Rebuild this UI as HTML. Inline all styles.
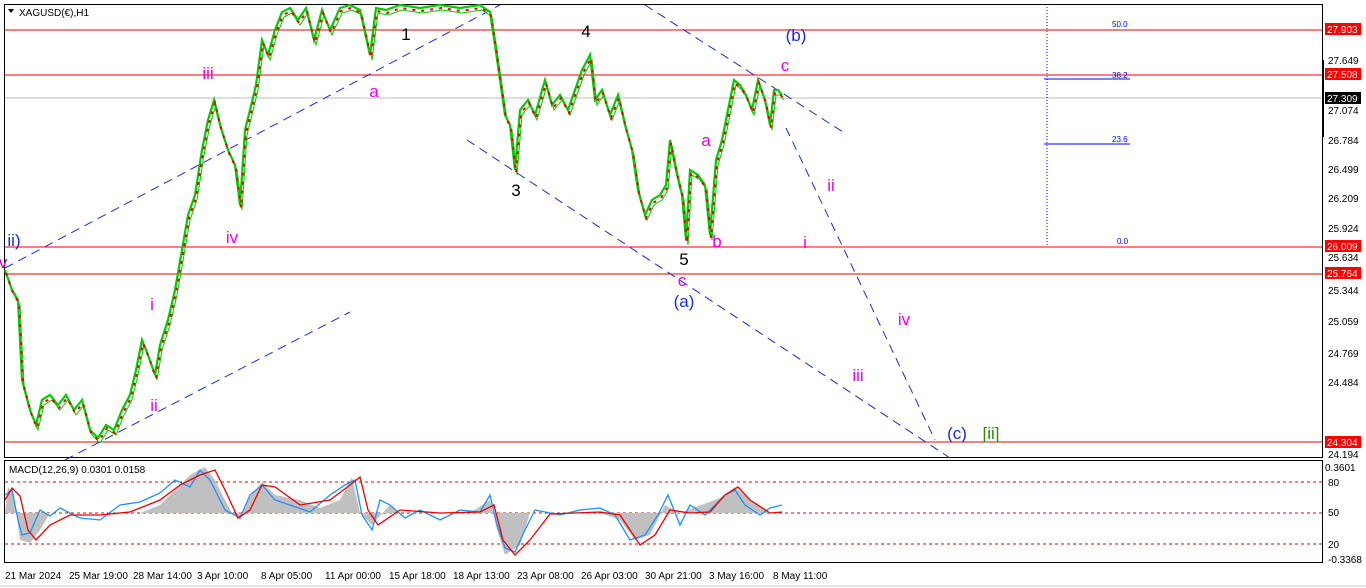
<!DOCTYPE html>
<html><head><style>
body{margin:0;width:1366px;height:588px;background:#fff;overflow:hidden;font-family:"Liberation Sans",sans-serif}
svg{display:block}
</style></head><body>
<svg width="1366" height="588" xmlns="http://www.w3.org/2000/svg" font-family="Liberation Sans, sans-serif">
<defs>
<polyline id="pr" fill="none" points="5,270 12,290 18,300 22,380 30,410 36,425 42,400 50,395 58,405 66,395 74,410 82,400 90,430 98,438 106,425 114,430 122,410 130,395 136,370 142,340 148,355 155,375 160,345 168,320 175,290 182,250 188,215 195,195 202,150 208,120 214,100 220,125 228,150 235,165 240,205 245,130 250,110 256,85 262,40 268,55 275,30 282,12 290,8 298,20 306,8 314,40 322,10 330,30 340,8 350,5 360,10 370,55 376,8 386,10 400,5 420,8 440,5 460,8 480,5 490,12 495,45 500,80 505,115 510,125 515,170 520,110 528,100 535,115 545,80 552,105 560,95 568,110 575,90 582,70 590,55 595,100 602,90 610,115 618,95 625,125 632,150 638,190 645,215 652,200 660,195 666,185 670,140 676,170 682,195 686,240 690,170 698,175 705,185 710,235 716,160 722,140 728,110 734,80 740,85 746,95 752,110 758,80 765,100 770,125 774,90 778,90 782,95"/>
</defs>
<rect width="1366" height="588" fill="#fff"/>
<rect x="4.5" y="4.5" width="1318" height="453" fill="none" stroke="#000"/>
<rect x="4.5" y="460.5" width="1318" height="102" fill="none" stroke="#000"/>
<line x1="0" y1="586" x2="1366" y2="586" stroke="#ccc"/>
<line x1="5" y1="30" x2="1322" y2="30" stroke="#e00"/>
<line x1="5" y1="75" x2="1322" y2="75" stroke="#e00"/>
<line x1="5" y1="98" x2="1322" y2="98" stroke="#bbb"/>
<line x1="5" y1="247" x2="1322" y2="247" stroke="#e00"/>
<line x1="5" y1="274" x2="1322" y2="274" stroke="#e00"/>
<line x1="5" y1="442" x2="1322" y2="442" stroke="#e00"/>
<line x1="1047" y1="4" x2="1047" y2="247" stroke="#00f" stroke-dasharray="1,2"/>
<line x1="1044" y1="79" x2="1130" y2="79" stroke="#00f"/>
<line x1="1044" y1="144" x2="1130" y2="144" stroke="#00f"/>
<g font-size="8" fill="#00f"><text x="1112" y="27">50.0</text><text x="1112" y="78">38.2</text><text x="1112" y="142">23.6</text><text x="1117" y="244">0.0</text></g>
<g stroke="#1a2cd6" stroke-dasharray="9,6" stroke-width="1" fill="none">
<line x1="5" y1="268" x2="500" y2="5"/>
<line x1="65" y1="460" x2="350" y2="312"/>
<line x1="467" y1="140" x2="950" y2="458"/>
<line x1="645" y1="5" x2="843" y2="132"/>
<line x1="786" y1="128" x2="935" y2="440"/>
</g>
<use href="#pr" stroke="#0c0" stroke-width="2.2"/>
<use href="#pr" stroke="#0c0" stroke-width="1" transform="translate(2,5)"/>
<use href="#pr" stroke="#e00" stroke-width="2" stroke-dasharray="3,6" transform="translate(1,3)"/>
<g font-size="17" text-anchor="middle">
<text x="3" y="268" fill="#c0c">v</text>
<text x="14" y="246" fill="#1a2cd6">ii)</text>
<text x="208" y="79" fill="#e0e">iii</text>
<text x="232" y="243" fill="#e0e">iv</text>
<text x="152" y="310" fill="#e0e">i</text>
<text x="154" y="411" fill="#e0e">ii</text>
<text x="374" y="97" fill="#e0e">a</text>
<text x="406" y="40" fill="#000">1</text>
<text x="516" y="196" fill="#000">3</text>
<text x="586" y="37" fill="#000">4</text>
<text x="684" y="265" fill="#000">5</text>
<text x="682" y="286" fill="#e0e">c</text>
<text x="684" y="307" fill="#1a2cd6">(a)</text>
<text x="706" y="146" fill="#e0e">a</text>
<text x="717" y="247" fill="#e0e">b</text>
<text x="785" y="71" fill="#e0e">c</text>
<text x="796" y="41" fill="#1a2cd6">(b)</text>
<text x="831" y="191" fill="#e0e">ii</text>
<text x="805" y="248" fill="#e0e">i</text>
<text x="904" y="325" fill="#e0e">iv</text>
<text x="858" y="381" fill="#e0e">iii</text>
<text x="957" y="439" fill="#1a2cd6">(c)</text>
<text x="991" y="439" fill="#2a8a00">[ii]</text>
</g>
<path d="M8 9 L14 9 L11 13 Z" fill="#000"/>
<text x="19" y="16" font-size="10">XAGUSD(€),H1</text>
<g font-size="10" fill="#000">
<text x="1328" y="64">27.649</text><text x="1328" y="114">27.074</text><text x="1328" y="144">26.784</text><text x="1328" y="173">26.499</text><text x="1328" y="202">26.209</text><text x="1328" y="232">25.924</text><text x="1328" y="261">25.634</text><text x="1328" y="294">25.344</text><text x="1328" y="325">25.059</text><text x="1328" y="357">24.769</text><text x="1328" y="386">24.484</text><text x="1328" y="458">24.194</text>
<text x="1325" y="471">0.3601</text><text x="1328" y="486">80</text><text x="1328" y="516">50</text><text x="1328" y="548">20</text><text x="1328" y="563">-0.3368</text>
</g>
<rect x="1322" y="60" width="2" height="77" fill="#000"/>
<g font-size="10" fill="#fff">
<rect x="1325" y="23" width="36" height="12" fill="#f00"/><text x="1327" y="33">27.903</text>
<rect x="1325" y="68" width="36" height="12" fill="#f00"/><text x="1327" y="78">27.508</text>
<rect x="1325" y="92" width="36" height="12" fill="#000"/><text x="1327" y="102">27.309</text>
<rect x="1325" y="240" width="36" height="12" fill="#f00"/><text x="1327" y="250">26.009</text>
<rect x="1325" y="267" width="36" height="12" fill="#f00"/><text x="1327" y="277">25.764</text>
<rect x="1325" y="436" width="36" height="12" fill="#f00"/><text x="1327" y="446">24.304</text>
</g>
<text x="9" y="473" font-size="10">MACD(12,26,9) 0.0301 0.0158</text>
<line x1="5" y1="482" x2="1322" y2="482" stroke="#e00" stroke-dasharray="3,3"/>
<line x1="5" y1="513" x2="1322" y2="513" stroke="#e00" stroke-dasharray="3,3"/>
<line x1="5" y1="544" x2="1322" y2="544" stroke="#e00" stroke-dasharray="3,3"/>
<polygon fill="#c0c0c0" points="5,513 8,487 14,495 20,540 30,543 40,530 50,513 140,513 160,505 190,475 205,467 215,480 225,500 232,513 240,520 250,497 262,482 275,495 300,500 320,508 340,500 352,477 360,513 372,525 390,505 400,513 470,513 490,500 497,530 505,555 520,545 530,513 600,513 620,520 635,540 650,535 665,505 680,513 720,498 735,487 750,500 770,513 780,513 5,513"/>
<polyline fill="none" stroke="#1e90ff" stroke-width="1.3" points="5,495 12,490 18,520 22,535 30,533 40,510 50,516 60,508 80,518 100,520 120,505 140,502 160,493 175,480 190,487 200,470 210,480 225,510 240,518 250,495 262,485 275,500 290,505 310,512 330,495 345,485 355,480 362,515 372,530 380,500 390,505 405,518 420,510 440,520 460,510 480,512 490,495 497,525 505,548 515,552 525,530 535,510 560,515 580,510 600,508 615,515 630,540 645,535 658,515 668,495 680,525 690,505 705,515 715,505 725,495 735,490 745,505 760,515 770,508 782,505"/>
<polyline fill="none" stroke="#e00" stroke-width="1.3" points="5,500 12,488 20,496 28,530 36,540 50,525 70,515 100,515 130,512 160,500 180,485 200,475 215,470 225,490 238,518 250,510 262,485 275,487 300,505 330,500 350,485 360,477 368,510 378,525 400,510 440,513 480,512 494,505 503,540 515,555 530,540 550,514 600,512 620,515 640,545 655,535 670,510 690,513 710,512 725,495 738,487 750,500 770,513 782,512"/>
<g font-size="10" fill="#000">
<text x="5" y="579">21 Mar 2024</text><text x="69" y="579">25 Mar 19:00</text><text x="133" y="579">28 Mar 14:00</text><text x="197" y="579">3 Apr 10:00</text><text x="261" y="579">8 Apr 05:00</text><text x="325" y="579">11 Apr 00:00</text><text x="389" y="579">15 Apr 18:00</text><text x="453" y="579">18 Apr 13:00</text><text x="517" y="579">23 Apr 08:00</text><text x="581" y="579">26 Apr 03:00</text><text x="645" y="579">30 Apr 21:00</text><text x="709" y="579">3 May 16:00</text><text x="773" y="579">8 May 11:00</text>
</g>
</svg>
</body></html>
